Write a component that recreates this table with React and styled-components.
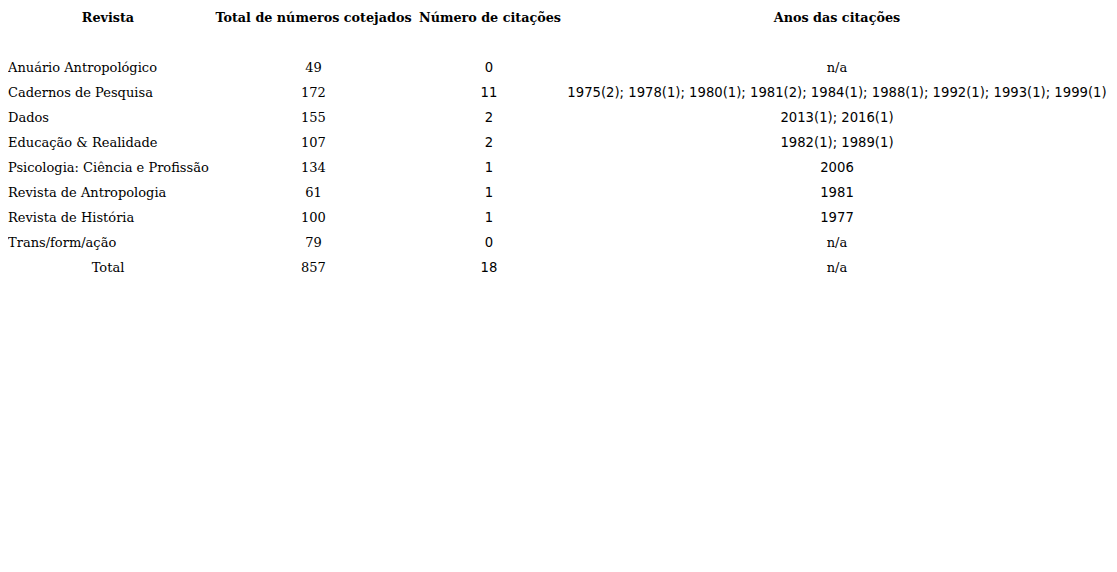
import React from "react";
import styled, { createGlobalStyle } from "styled-components";

const GlobalStyle = createGlobalStyle`
  body {
    margin: 8px;
    background: #ffffff;
    color: #000000;
    font-family: "DejaVu Serif", serif;
  }
`;

const Table = styled.table`
  border-collapse: separate;
  border-spacing: 2px 0;
  table-layout: fixed;
  width: 1109px;
  margin-left: -2px;
`;

const Col = styled.col`
  width: ${(p) => p.$w}px;
`;

const Row = styled.tr`
  height: ${(p) => p.$h || 25}px;
`;

const Head = styled.th`
  font-family: "DejaVu Serif", serif;
  font-weight: bold;
  font-size: 12.75px;
  line-height: 16px;
  text-align: center;
  vertical-align: top;
  padding: 2px 0 0;
  white-space: nowrap;
`;

const Cell = styled.td`
  font-family: ${(p) => (p.$sans ? '"DejaVu Sans", sans-serif' : '"DejaVu Serif", serif')};
  font-weight: normal;
  font-size: ${(p) => (p.$sans ? 13.2 : 13)}px;
  line-height: 16px;
  text-align: ${(p) => (p.$left ? "left" : "center")};
  vertical-align: middle;
  padding: 0;
  white-space: nowrap;
`;

const rows = [
  ["Anuário Antropológico", "49", "0", "n/a"],
  ["Cadernos de Pesquisa", "172", "11", "1975(2); 1978(1); 1980(1); 1981(2); 1984(1); 1988(1); 1992(1); 1993(1); 1999(1)"],
  ["Dados", "155", "2", "2013(1); 2016(1)"],
  ["Educação & Realidade", "107", "2", "1982(1); 1989(1)"],
  ["Psicologia: Ciência e Profissão", "134", "1", "2006"],
  ["Revista de Antropologia", "61", "1", "1981"],
  ["Revista de História", "100", "1", "1977"],
  ["Trans/form/ação", "79", "0", "n/a"],
];

export default function App() {
  return (
    <>
      <GlobalStyle />
      <Table>
        <colgroup>
          <Col $w={200} />
          <Col $w={207} />
          <Col $w={140} />
          <Col $w={552} />
        </colgroup>
        <thead>
          <Row>
            <Head>Revista</Head>
            <Head>Total de números cotejados</Head>
            <Head>Número de citações</Head>
            <Head>Anos das citações</Head>
          </Row>
        </thead>
        <tbody>
          <Row $h={22}>
            <Cell />
            <Cell />
            <Cell />
            <Cell />
          </Row>
          {rows.map((r) => (
            <Row key={r[0]}>
              <Cell $left>{r[0]}</Cell>
              <Cell>{r[1]}</Cell>
              <Cell $sans>{r[2]}</Cell>
              <Cell $sans={r[3] !== "n/a"}>{r[3]}</Cell>
            </Row>
          ))}
          <Row>
            <Cell>Total</Cell>
            <Cell>857</Cell>
            <Cell $sans>18</Cell>
            <Cell>n/a</Cell>
          </Row>
        </tbody>
      </Table>
    </>
  );
}
